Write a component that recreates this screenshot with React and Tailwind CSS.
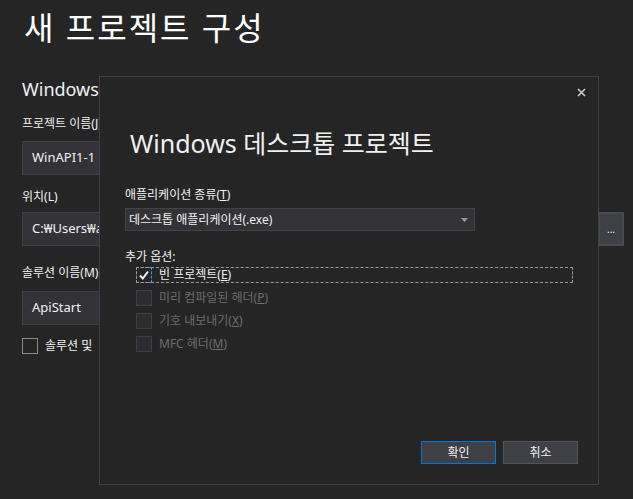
import React from 'react';

const font = { fontFamily: '"Noto Sans", "Noto Sans CJK KR", sans-serif' };

function Field({ label, value, button, labelTop, inputTop }) {
  return (
    <div className="flex flex-col" style={{ marginTop: labelTop }}>
      <div className="text-[12px] leading-[16px] text-[#f1f1f1] h-[16px] whitespace-nowrap">{label}</div>
      <div className="flex gap-[4px]" style={{ marginTop: inputTop }}>
        <div className="w-[572px] h-[34px] bg-[#333337] border border-[#3f3f46] flex items-center pl-[9px] text-[13px] text-[#f1f1f1]">
          {value}
        </div>
        {button && (
          <div className="w-[26px] h-[34px] bg-[#3f3f46] border-2 border-[#4b4b52] flex items-center justify-center text-[10px] text-[#f1f1f1] leading-none">
            ...
          </div>
        )}
      </div>
    </div>
  );
}

function Check({ label, checked, focused, disabled }) {
  return (
    <div className="flex items-center h-[16px] relative">
      <div
        className={
          'w-[16px] h-[16px] border flex items-center justify-center ' +
          (focused ? 'border-[#3399ff] border-dashed' : 'border-[#3f3f46]') +
          (disabled ? ' bg-[#2d2d30]' : ' bg-[#252526]')
        }
      >
        {checked && (
          <svg width="12" height="12" viewBox="0 0 12 12">
            <path d="M2 6.5 L4.8 9.5 L10 2.5" fill="none" stroke="#f1f1f1" strokeWidth="2" />
          </svg>
        )}
      </div>
      <span className={'ml-[7px] text-[12px] leading-[16px] ' + (disabled ? 'text-[#6d6d6d]' : 'text-[#f1f1f1]')}>{label}</span>
      {focused && <div className="absolute left-0 top-0 w-[437px] h-[16px] border border-dashed border-[#9a9a9a] pointer-events-none" />}
    </div>
  );
}

export default function App() {
  return (
    <div className="relative w-[633px] h-[499px] bg-[#252526] overflow-hidden text-[#f1f1f1]" style={font}>
      {/* background page */}
      <div className="flex flex-col pl-[22px] pt-[6px]">
        <h1 className="text-[32px] leading-[44px] font-normal text-white tracking-[2px] ml-[2px]">새 프로젝트 구성</h1>
        <div className="text-[18px] leading-[24px] mt-[27px] text-[#f1f1f1] whitespace-nowrap">Windows</div>
        <Field label="프로젝트 이름(J)" value="WinAPI1-1" labelTop={15} inputTop={9} />
        <Field label="위치(L)" value="C:₩Users₩ae" button labelTop={14} inputTop={7} />
        <Field label="솔루션 이름(M)" value="ApiStart" labelTop={19} inputTop={10} />
        <div className="flex items-center mt-[12px]">
          <div className="w-[16px] h-[16px] border border-[#8a8a8a]" />
          <span className="ml-[7px] text-[12px] text-[#f1f1f1] whitespace-nowrap">솔루션 및</span>
        </div>
      </div>

      {/* dialog */}
      <div className="absolute left-[99px] top-[76px] w-[500px] h-[409px] bg-[#252526] border border-[#3f3f46] flex flex-col">
        <div className="flex justify-end pt-[11px] pr-[12px]">
          <svg width="9" height="9" viewBox="0 0 9 9">
            <path d="M1 1 L8 8 M8 1 L1 8" stroke="#d0d0d0" strokeWidth="1.5" />
          </svg>
        </div>
        <div className="pl-[30px] mt-[30px] text-[25px] leading-[32px] text-[#f1f1f1]">Windows 데스크톱 프로젝트</div>
        <div className="pl-[25px] mt-[28px] flex flex-col">
          <div className="text-[12px] leading-[16px]">애플리케이션 종류(<span className="underline">T</span>)</div>
          <div className="mt-[5px] w-[350px] h-[23px] bg-[#333337] border border-[#434346] flex items-center justify-between pl-[3px] pr-[6px] text-[12px]">
            <span>데스크톱 애플리케이션(.exe)</span>
            <svg width="7" height="4" viewBox="0 0 7 4">
              <path d="M0 0 H7 L3.5 4 Z" fill="#999999" />
            </svg>
          </div>
          <div className="mt-[18px] text-[12px] leading-[16px]">추가 옵션:</div>
          <div className="flex flex-col gap-[7px] mt-[2px] ml-[11px]">
            <Check label={<>빈 프로젝트(<span className="underline">E</span>)</>} checked focused />
            <Check label={<>미리 컴파일된 헤더(<span className="underline">P</span>)</>} disabled />
            <Check label={<>기호 내보내기(<span className="underline">X</span>)</>} disabled />
            <Check label={<>MFC 헤더(<span className="underline">M</span>)</>} disabled />
          </div>
        </div>
        <div className="mt-auto flex justify-end gap-[7px] pr-[20px] pb-[20px]">
          <div className="w-[75px] h-[23px] bg-[#3f3f46] border border-[#0078d4] flex items-center justify-center text-[12px]">확인</div>
          <div className="w-[75px] h-[23px] bg-[#3f3f46] border border-[#555555] flex items-center justify-center text-[12px]">취소</div>
        </div>
      </div>
    </div>
  );
}
